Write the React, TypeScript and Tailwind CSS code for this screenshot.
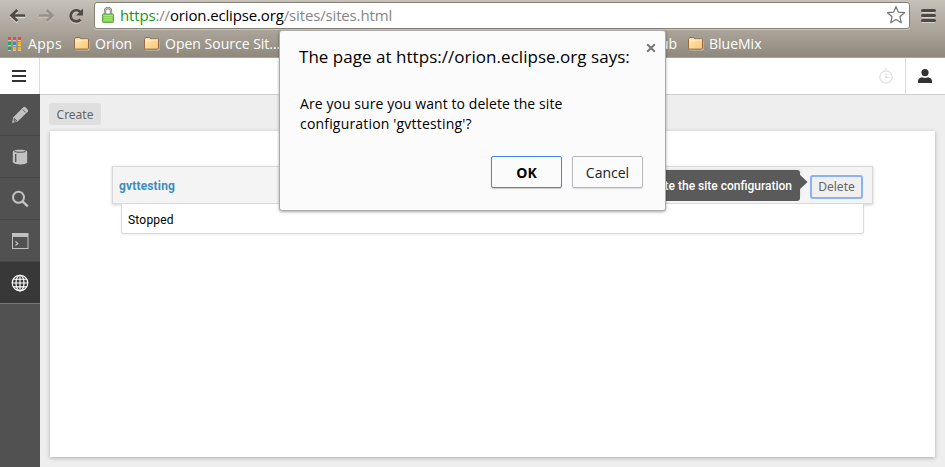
import type { ReactNode } from 'react';

const uiFont = "font-['Open_Sans','Noto_Sans',sans-serif]";
const pageFont = "font-['Roboto','Liberation_Sans',sans-serif]";
const buttonFont = "font-['Noto_Sans','Open_Sans',sans-serif]";

function Folder() {
  return (
    <svg width="16" height="14" viewBox="0 0 16 14" className="shrink-0">
      <defs>
        <linearGradient id="folder" x1="0" y1="0" x2="1" y2="1">
          <stop offset="0" stopColor="#ffe9bd" />
          <stop offset="1" stopColor="#f9c66d" />
        </linearGradient>
      </defs>
      <path d="M1.5 12.900h13.400V3.600" fill="none" stroke="#d5d0c6" />
      <path d="M.5 11.500v-9l1-1.900h4.600l1 1.400h6.900l.5.600v8.900l-.6.600H1.100z" fill="url(#folder)" stroke="#936840" />
      <path d="M1.500 3.900h4.800l1-1H14" fill="none" stroke="#fff0cb" />
    </svg>
  );
}

function Bookmark({ label, className }: { label: string; className: string }) {
  return (
    <div className={`flex shrink-0 items-center gap-[5px] whitespace-nowrap ${className}`}>
      <Folder />
      <span>{label}</span>
    </div>
  );
}

const appColors = [
  '#f1453d', '#f1453d', '#f1453d',
  '#25a55a', '#2f8bf0', '#f6b40e',
  '#25a55a', '#f6b40e', '#f6b40e',
];

function BrowserChrome() {
  return (
    <div className={`flex h-[58px] flex-col border-b border-[#aaa59c] bg-linear-to-b from-[#c6c1b9] via-[#aca69c] to-[#8f897d] ${uiFont}`}>
      <div className="flex h-[30px] items-center">
        <svg width="94" height="30" viewBox="0 0 94 30" className="shrink-0" fill="none">
          <path d="M25 17H11.500m5.800-5.500L11.500 17l5.800 5.500" stroke="#ddd9d2" strokeWidth="2.4" />
          <path d="M25 15.500H11.500m5.800-5.500l-5.800 5.500 5.800 5.500" stroke="#4e4b47" strokeWidth="2.6" />
          <path d="M39 16.500h13.500M46.700 11l5.800 5.500-5.800 5.500" stroke="#c9c5bd" strokeWidth="2.5" />
          <path d="M39 15.500h13.500M46.700 10l5.800 5.500-5.800 5.500" stroke="#96918a" strokeWidth="2.5" />
          <path d="M80.500 20.700a5.600 5.600 0 1 1-.2-7.500" stroke="#d0ccc4" strokeWidth="2.7" />
          <path d="M80.500 19.500a5.600 5.600 0 1 1-.2-7.500" stroke="#4e4b47" strokeWidth="2.7" />
          <path d="M83 8.500v7h-7z" fill="#4e4b47" />
        </svg>
        <div className="flex h-[27px] w-[816px] items-center rounded-[3px] border border-[#857f76] bg-white pl-[7px] pr-[3px] shadow-[0_1px_0_#cbc7c0]">
          <svg width="12" height="16" viewBox="0 0 12 16" className="shrink-0">
            <path d="M3 8V4a3 3 0 0 1 6 0v4" fill="none" stroke="#818181" strokeWidth="2.4" />
            <path d="M3 8V4a3 3 0 0 1 6 0v4" fill="none" stroke="#d1d1d1" strokeWidth=".8" />
            <rect x=".5" y="7" width="11" height="8.4" rx=".7" fill="#8ad35e" stroke="#5ea53c" />
            <path d="M1.500 8.500h9M2 10.700h8M2 12.800h8" stroke="#b4eb84" strokeWidth=".8" />
          </svg>
          <span className="ml-[6px] flex-1 whitespace-nowrap text-[15px] leading-5 tracking-[-0.15px] text-[#858585]">
            <span className="text-[#159615]">https</span>://<span className="text-black">orion.eclipse.org</span>/sites/sites.html
          </span>
          <svg width="20" height="20" viewBox="0 0 20 20">
            <path d="M10 1.500l2.400 5.700 6.100.5-4.600 4 1.400 6.100L10 14.500l-5.300 3.300 1.400-6.100-4.600-4 6.100-.5z" fill="white" stroke="#777" strokeWidth="1.2" strokeLinejoin="round" />
          </svg>
        </div>
        <svg width="35" height="30" viewBox="0 0 35 30">
          <path d="M12 12.500h13M12 17.500h13M12 22.500h13" stroke="#d4d0ca" />
          <path d="M12.500 10.500h12M12.500 15.500h12M12.500 20.500h12" stroke="#4d4a46" strokeWidth="3" strokeLinecap="round" />
        </svg>
      </div>
      <div className="flex h-[27px] items-center pl-2 text-[14px] leading-5 text-white">
        <div className="grid shrink-0 grid-cols-3 gap-[2px]">
          {appColors.map((color, i) => (
            <i key={i} className="h-[3px] w-[3px] shadow-[0_1px_0_#c9c5bd]" style={{ background: color }} />
          ))}
        </div>
        <span className="ml-[7px] w-[46px] shrink-0 tracking-[0.3px]">Apps</span>
        <Bookmark label="Orion" className="w-[70px]" />
        <Bookmark label="Open Source Sit..." className="w-[487px]" />
        <span className="w-[45px] shrink-0 text-right">GitHub</span>
        <Bookmark label="BlueMix" className="ml-[12px]" />
      </div>
    </div>
  );
}

function Header() {
  return (
    <header className="flex h-[37px] border-b border-[#cfcfcf] bg-white">
      <div className="flex w-10 items-center border-r border-[#dcdcdc] pl-[12px]">
        <svg width="14" height="12" viewBox="0 0 14 12">
          <path d="M0 1h14M0 6h14M0 11h14" stroke="#333" strokeWidth="2" />
        </svg>
      </div>
      <div className="flex flex-1 items-center justify-end pr-[12px]">
        <svg width="14" height="16" viewBox="0 0 14 16" fill="none" stroke="#dedede" strokeWidth="1.2">
          <circle cx="7" cy="9" r="6.2" />
          <path d="M5.500 1h3M7 5v4.500h3.500" />
        </svg>
      </div>
      <div className="flex w-10 items-center border-l border-[#dcdcdc] pl-[12px]">
        <svg width="14" height="14" viewBox="0 0 14 14" fill="#333">
          <circle cx="7" cy="3.600" r="3.600" />
          <path d="M0 14v-2.200C.4 9.500 2 8.600 4 8.200c1.800 1 4.200 1 6 0 2 .4 3.600 1.300 4 3.600V14z" />
        </svg>
      </div>
    </header>
  );
}

function NavItem({ active = false, children }: { active?: boolean; children: ReactNode }) {
  return (
    <div className={`flex h-[42px] w-10 items-center justify-center border-b ${active ? 'border-[#777] bg-[#383838]' : 'border-[#464646]'}`}>
      <svg width="18" height="18" viewBox="0 0 18 18" fill="none" stroke="#c2c2c2">
        {children}
      </svg>
    </div>
  );
}

function Sidebar() {
  return (
    <nav className="w-10 shrink-0 bg-[#515151]">
      <NavItem>
        <path d="M1 17l1.300-5.800L12.600 1.100h1.600l2.800 2.800v1.600L6.600 15.400z" fill="#c2c2c2" stroke="none" />
        <path d="M11.800 3.600l2.800 2.800M3.200 12.400l2.600 2.300-2.700.7z" stroke="#515151" strokeWidth=".9" />
      </NavItem>
      <NavItem>
        <path d="M1.800 3.500C3 1 15 1 16.200 3.500v11c-1 2.600-12 2.600-14.400 0z" fill="#c2c2c2" stroke="none" />
        <path d="M3.500 3.500c2 1 9 1 11 0" stroke="#515151" />
        <path d="M4.700 6v8" stroke="#515151" strokeWidth="1.300" />
      </NavItem>
      <NavItem>
        <circle cx="7.500" cy="7.300" r="5.500" strokeWidth="2" />
        <path d="M11.500 11.300l5.300 5.100" strokeWidth="2.400" />
      </NavItem>
      <NavItem>
        <rect x="1.500" y="1.500" width="15.500" height="15" />
        <path d="M1.500 3.200h15.500" strokeWidth="3.500" />
        <path d="M4.500 9.500l2.300 2-2.300 2" strokeWidth="1.200" />
      </NavItem>
      <NavItem active>
        <g stroke="#fff" strokeWidth="1.150">
          <circle cx="9" cy="9" r="7.800" />
          <ellipse cx="9" cy="9" rx="4" ry="7.800" />
          <path d="M9 1v16M1 9h16M2.500 5.200h13M2.500 12.800h13" />
        </g>
      </NavItem>
    </nav>
  );
}

function Site() {
  return (
    <div className={`mx-[62px] mt-[35px] w-[761px] ${pageFont} text-[12px]`}>
      <div className="flex h-[38px] items-center justify-between border border-[#d9d9d9] bg-[#f4f4f4] pl-[6px] pr-[9px] shadow-[0_1px_3px_#cfcfcf]">
        <span className="pt-[2px] font-bold tracking-[0.15px] text-[#3c8ebc]">gvttesting</span>
        <div className="relative">
          <button className={`mt-[3px] block h-[24px] w-[53px] rounded-[3px] border-2 border-[#8ab2f5] bg-[#efefef] text-[12px] leading-5 text-[#666] ${buttonFont}`}>
            Delete
          </button>
          <div className="absolute right-[63px] top-[-2px] h-[31px] rounded-[3px] bg-[#5a5a5a] px-[8px] text-[12px] font-medium leading-[32px] whitespace-nowrap text-white shadow-[2px_-2px_3px_-2px_#ccc]">
            Delete the site configuration
            <svg width="9" height="16" viewBox="0 0 9 16" className="absolute right-[-8px] top-[4px]">
              <path d="M0 0l8.500 8L0 16z" fill="#5a5a5a" />
            </svg>
          </div>
        </div>
      </div>
      <div className="ml-[9px] flex h-[30px] w-[743px] items-center rounded-b-[3px] border border-t-0 border-[#dadada] bg-white pl-[6px] pt-[2px] tracking-[0.2px] text-black shadow-[0_1px_2px_#ececec]">
        Stopped
      </div>
    </div>
  );
}

function ConfirmDialog() {
  return (
    <div role="dialog" className={`absolute left-[279px] top-[30px] flex h-[181px] w-[387px] flex-col rounded-[3px] border border-[#aaa] bg-[#fbfbfb] px-5 text-black shadow-[0_1px_3px_rgba(0,0,0,0.35)] ${uiFont}`}>
      <h1 className="mt-[14px] -ml-px whitespace-nowrap text-[17px] leading-6 tracking-[0.03px]">The page at https://orion.eclipse.org says:</h1>
      <p className="mt-[25px] whitespace-nowrap text-[14px] leading-5 tracking-[0.08px]">
        Are you sure you want to delete the site<br />
        <span className="tracking-[0.18px]">configuration &#39;gvttesting&#39;?</span>
      </p>
      <div className="mr-[2px] mt-[22px] flex justify-end gap-[10px] text-[14px]">
        <button className="h-[32px] w-[71px] rounded-[2px] border border-[#4285f4] font-bold shadow-[0_1px_1px_#ccc]">OK</button>
        <button className="h-[32px] w-[71px] rounded-[2px] border border-[#b8b8b8] text-[#222] shadow-[0_1px_1px_#ddd]">Cancel</button>
      </div>
      <svg width="10" height="10" viewBox="0 0 10 10" className="absolute right-[9px] top-[12px]">
        <path d="M1.200 1.200l7.600 7.600M8.800 1.200L1.200 8.800" stroke="#777" strokeWidth="2" />
      </svg>
    </div>
  );
}

export default function App() {
  return (
    <div className="relative flex h-[467px] w-[945px] flex-col overflow-hidden bg-[#eee]">
      <BrowserChrome />
      <Header />
      <div className="-mt-px flex flex-1">
        <Sidebar />
        <main className="flex-1 border-t border-[#cfcfcf] pl-[10px]">
          <div className="flex h-[36px] items-start pt-[8px]">
            <button className={`-ml-px h-[22px] w-[52px] rounded-[3px] bg-[#dfdfdf] pt-px text-[12px] leading-[21px] text-[#666] ${buttonFont}`}>Create</button>
          </div>
          <section className="flow-root h-[326px] w-[885px] bg-white shadow-[0_1px_4px_#aaa]">
            <Site />
          </section>
        </main>
      </div>
      <ConfirmDialog />
    </div>
  );
}
